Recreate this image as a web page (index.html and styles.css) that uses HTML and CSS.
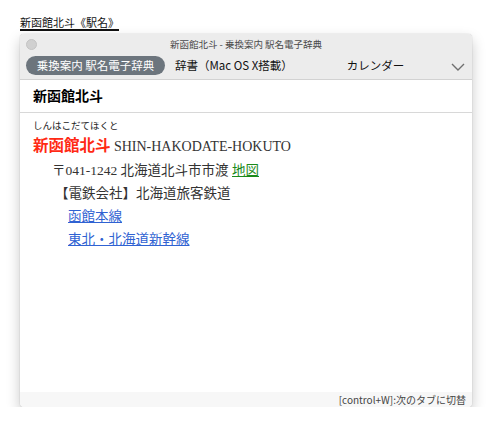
FILE: index.html
```html
<!DOCTYPE html>
<html lang="ja">
<head>
<meta charset="utf-8">
<link rel="stylesheet" href="styles.css">
</head>
<body>
<div class="page">
  <div class="label">新函館北斗《駅名》</div>
  <div class="window">
    <div class="toolbar">
      <div class="titlebar">
        <span class="dot"></span>
        <span class="title">新函館北斗 - 乗換案内 駅名電子辞典</span>
      </div>
      <div class="tabs">
        <span class="tab active">乗換案内 駅名電子辞典</span>
        <span class="tab dict">辞書（Mac OS X搭載）</span>
        <span class="tab cal">カレンダー</span>
        <svg class="chev" width="14" height="8" viewBox="0 0 14 8"><path d="M1 1 L7 7 L13 1" fill="none" stroke="#6f6f6f" stroke-width="1.4"/></svg>
      </div>
    </div>
    <div class="content">
      <div class="head">新函館北斗</div>
      <div class="body">
        <div class="kana">しんはこだてほくと</div>
        <div class="line name"><span class="red">新函館北斗</span> <span class="roman">SHIN-HAKODATE-HOKUTO</span></div>
        <div class="line addr">〒041-1242 北海道北斗市市渡 <a class="map">地図</a></div>
        <div class="line comp">【電鉄会社】北海道旅客鉄道</div>
        <div class="line link"><a class="blue">函館本線</a></div>
        <div class="line link"><a class="blue">東北・北海道新幹線</a></div>
      </div>
    </div>
    <div class="footer">[control+W]:次のタブに切替</div>
  </div>
</div>
</body>
</html>
```

FILE: styles.css
```css
html, body {
  margin: 0;
  padding: 0;
  background: #ffffff;
}
.page {
  padding: 15px 0 0 20px;
  font-family: "Noto Sans CJK JP", "Noto Sans", sans-serif;
}
.label {
  display: block;
  width: fit-content;
  font-size: 11px;
  line-height: 14px;
  height: 14px;
  color: #111;
  border-bottom: 2px solid #111;
  padding-bottom: 0;
}
.window {
  margin-top: 3px;
  width: 452px;
  height: 373px;
  border-radius: 4px;
  background: #fff;
  box-shadow: 0 0 1px rgba(0,0,0,0.35), 0 6px 14px rgba(0,0,0,0.22);
  display: flex;
  flex-direction: column;
  overflow: hidden;
}
.toolbar {
  background: #ececec;
  border-bottom: 1px solid #d2d2d2;
  height: 45px;
}
.titlebar {
  height: 19px;
  display: flex;
  align-items: center;
  position: relative;
}
.dot {
  width: 11px;
  height: 11px;
  border-radius: 50%;
  background: #d0d0d0;
  border: 1px solid #c4c4c4;
  box-sizing: border-box;
  margin-left: 6px;
  margin-top: 2px;
}
.title {
  position: absolute;
  left: 0;
  right: 0;
  text-align: center;
  font-size: 9.5px;
  color: #4a4a4a;
  top: 4px;
  line-height: 12px;
}
.tabs {
  height: 25px;
  display: flex;
  align-items: center;
  padding-left: 6px;
}
.tab {
  font-size: 11.5px;
  color: #111;
  line-height: 19px;
}
.tab.active {
  background: #6c757d;
  color: #fff;
  border-radius: 10px;
  width: 139px;
  text-align: center;
  height: 19px;
}
.tab.dict {
  margin-left: 10px;
}
.tab.cal {
  margin-left: 54px;
}
.chev {
  margin-left: auto;
  margin-right: 7px;
  margin-top: 2px;
}
.content {
  flex: 1;
}
.head {
  height: 32px;
  line-height: 30px;
  padding-left: 13px;
  font-size: 14px;
  font-weight: bold;
  color: #000;
  border-bottom: 1px solid #d8d8d8;
}
.body {
  padding: 5px 0 0 13px;
  font-family: "Liberation Serif", "Noto Sans CJK JP", serif;
  color: #333;
}
.kana {
  font-family: "Noto Sans CJK JP", sans-serif;
  font-size: 9.5px;
  line-height: 14px;
  margin-bottom: 2px;
  color: #222;
}
.line {
  font-size: 13.5px;
  line-height: 23px;
}
.name {
  line-height: 24px;
}
.red {
  color: #ff2a14;
  font-size: 15.5px;
  font-weight: bold;
}
.roman {
  font-size: 14px;
}
.addr {
  padding-left: 19px;
}
.comp {
  padding-left: 22px;
}
.link {
  padding-left: 35px;
}
a {
  text-decoration: underline;
}
.map {
  color: #1a8a1a;
}
.blue {
  color: #2f62d2;
}
.footer {
  height: 15px;
  background: #f7f7f7;
  font-size: 10px;
  line-height: 15px;
  color: #444;
  text-align: right;
  padding-right: 6px;
}
```
